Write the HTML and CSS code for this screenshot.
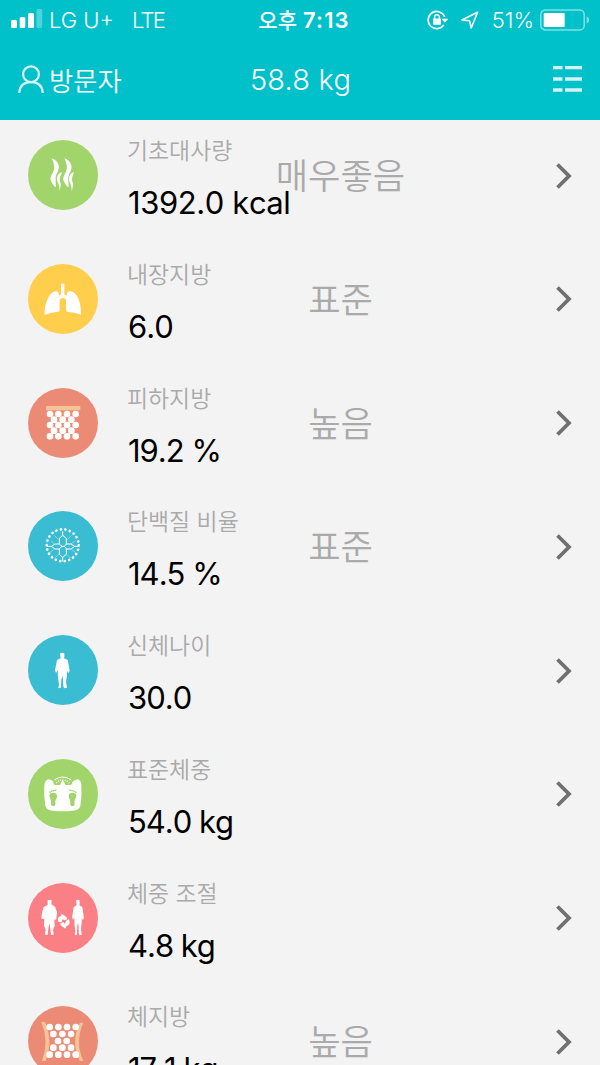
FILE: index.html
```html
<!DOCTYPE html>
<html lang="ko">
<head>
    <meta charset="UTF-8">
    <title>체중</title>
    <link rel="stylesheet" href="styles.css">
</head>
<body>
    <svg class="defs" width="0" height="0">
        <defs>
            <path id="man" d="M-7 1Q0-3 6 1L6 12L5 16L16 21L19 37L22 53L18 61L14 53L14 66L11 87L14 104L6 106L3 101L2 78L0 67L-3 82L-4 104L-12 106L-10 94L-13 75L-14 52L-19 60L-22 51L-19 37L-16 21L-5 16Z"/>
        </defs>
    </svg>

    <header class="header">
        <div class="statusbar">
            <div class="side">
                <svg class="signal" width="32" height="20" viewBox="0 0 32 20" fill="#fff">
                    <rect x="0" y="11" width="6" height="8" rx="1.5"/>
                    <rect x="8.7" y="8" width="5.6" height="11" rx="1.5"/>
                    <rect x="17" y="4" width="6" height="15" rx="1.5"/>
                    <rect x="25.5" y="0" width="5.7" height="19" rx="1.5" opacity=".3"/>
                </svg>
                <span class="carrier">LG U+</span>
                <span class="network">LTE</span>
            </div>
            <div class="clock"><span class="ampm">오후</span> <span class="time">7:13</span></div>
            <div class="side right">
                <svg class="lock" width="22" height="20" viewBox="0 0 22 20" fill="none" stroke="#fff" stroke-width="1.6">
                    <path d="M17.8 7A8.6 8.6 0 1 0 16.8 15"/>
                    <path d="M14.5 8.8H21.3L17.9 12.8Z" fill="#fff" stroke="none"/>
                    <rect x="6" y="8.5" width="8" height="6.2" rx=".8" fill="#fff" stroke="none"/>
                    <path d="M7.6 9V7.2a2.4 2.4 0 0 1 4.8 0V9" stroke-width="1.4"/>
                </svg>
                <svg class="arrow" width="18" height="18" viewBox="0 0 18 18" fill="none" stroke="#fff" stroke-width="1.6" stroke-linejoin="round">
                    <path d="M16.6 1.2L.9 9L8.6 9.8L10.2 17Z"/>
                </svg>
                <span class="percent">51%</span>
                <svg class="battery" width="50" height="22" viewBox="0 0 50 22">
                    <rect x=".8" y=".9" width="43.4" height="20" rx="4.5" fill="none" stroke="#fff" stroke-width="1.5" opacity=".5"/>
                    <rect x="3.7" y="3.9" width="21" height="14" rx="1" fill="#fff"/>
                    <path d="M46.7 7.2Q49.2 8.5 49.2 10.9T46.7 14.8Z" fill="#fff" opacity=".5"/>
                </svg>
            </div>
        </div>
        <div class="navbar">
            <div class="side user">
                <svg width="26" height="29" viewBox="0 0 26 29" fill="none" stroke="#d9f6f7" stroke-width="2.2">
                    <circle cx="13" cy="9.2" r="7.9"/>
                    <path d="M1.2 28Q2 17.2 13 17.2T24.8 28"/>
                </svg>
                <span class="username">방문자</span>
            </div>
            <div class="weight">58.8 kg</div>
            <div class="side right">
                <svg width="30" height="28" viewBox="0 0 30 28" fill="#d5f4f5">
                    <path d="M0 1h9.5v3.3H0zM12 1h17v3.3H12zM0 12.3h9.5v3.4H0zM12 12.3h17v3.4H12zM0 23.3h9.5v3.4H0zM12 23.3h17v3.4H12z"/>
                </svg>
            </div>
        </div>
    </header>

    <main class="list">
        <div class="row">
            <div class="icon green">
                <svg viewBox="24 30 210 210" fill="#fff">
                    <path d="M95 85C109 89 119 103 116 116C112 130 105 137 107 151C106 162 111 173 105 171C96 159 87 149 94 137C102 123 108 111 95 85Z"/>
                    <path d="M126 126C111 131 109 145 113 157C118 167 118 174 119 184C120 171 125 166 121 157C116 145 122 138 126 126Z"/>
                    <path d="M133 85C147 89 157 103 154 116C150 130 143 137 145 151C144 162 149 173 143 171C134 159 125 149 132 137C140 123 146 111 133 85Z"/>
                    <path d="M162 126C147 131 145 145 149 157C154 167 154 174 156 184C157 171 162 166 158 157C153 145 159 138 162 126Z"/>
                </svg>
            </div>
            <div class="info">
                <div class="label">기초대사량</div>
                <div class="value kcal">1392.0 kcal</div>
            </div>
            <div class="state">매우좋음</div>
            <svg class="chevron" viewBox="0 0 16 26"><path d="M1.5 1.5L13 13L1.5 24.5"/></svg>
        </div>

        <div class="row">
            <div class="icon yellow">
                <svg viewBox="24 27 210 210" fill="#fff">
                    <path d="M123 86H133V116Q137 124 141 121Q139 112 147 109C164 106 179 128 182 158L183 179C169 172 154 172 142 170Q137 169 138 160V134Q136 129 129 129T119 134V160Q120 169 115 170C102 172 88 173 74 180C72 147 89 106 110 109Q119 112 116 121Q123 123 123 115Z"/>
                </svg>
            </div>
            <div class="info">
                <div class="label">내장지방</div>
                <div class="value">6.0</div>
            </div>
            <div class="state">표준</div>
            <svg class="chevron" viewBox="0 0 16 26"><path d="M1.5 1.5L13 13L1.5 24.5"/></svg>
        </div>

        <div class="row">
            <div class="icon coral">
                <svg viewBox="24 24 210 210">
                    <path d="M78 78H181V91H78Z" fill="#f5c396"/>
                    <g class="cells">
                        <path d="M90 102h.1M115 102h.1M141 102h.1M167 102h.1"/>
                        <path d="M102 119h.1M128 119h.1M154 119h.1"/>
                        <path d="M90 135h.1M115 135h.1M141 135h.1M167 135h.1"/>
                        <path d="M102 152h.1M128 152h.1M154 152h.1"/>
                        <path d="M90 169h.1M115 169h.1M141 169h.1M167 169h.1"/>
                    </g>
                </svg>
            </div>
            <div class="info">
                <div class="label">피하지방</div>
                <div class="value">19.2 %</div>
            </div>
            <div class="state">높음</div>
            <svg class="chevron" viewBox="0 0 16 26"><path d="M1.5 1.5L13 13L1.5 24.5"/></svg>
        </div>

        <div class="row">
            <div class="icon blue">
                <svg viewBox="24 21 210 210" fill="none" stroke="#fff">
                    <circle cx="128" cy="124" r="48" stroke-width="8" stroke-linecap="round" stroke-dasharray=".1 13.6"/>
                    <path stroke-width="3" d="M128 82V94L118 103V120L126 127H133L139 120V103L128 94M126 127L118 134V151L128 160L139 151V134L133 127M128 160V172M118 120H105L94 127L105 135H118M139 120H153L164 127L153 135H139M94 127H80M164 127H178"/>
                    <path stroke-width="1.6" opacity=".75" d="M115 107L103 94M142 107L154 94M104 120L92 110M153 120L166 110M104 135L90 145M153 135L166 145M118 150L104 163M139 150L152 163"/>
                </svg>
            </div>
            <div class="info">
                <div class="label">단백질 비율</div>
                <div class="value">14.5 %</div>
            </div>
            <div class="state">표준</div>
            <svg class="chevron" viewBox="0 0 16 26"><path d="M1.5 1.5L13 13L1.5 24.5"/></svg>
        </div>

        <div class="row">
            <div class="icon blue">
                <svg viewBox="24 21 210 210" fill="#fff">
                    <use href="#man" x="127" y="75"/>
                </svg>
            </div>
            <div class="info">
                <div class="label">신체나이</div>
                <div class="value">30.0</div>
            </div>
            <div class="state"></div>
            <svg class="chevron" viewBox="0 0 16 26"><path d="M1.5 1.5L13 13L1.5 24.5"/></svg>
        </div>

        <div class="row">
            <div class="icon green">
                <svg viewBox="24 21 210 210" fill="#fff">
                    <path d="M84 82Q92 82 99 88L104 99H152L159 88Q166 82 174 82Q184 86 184 101Q186 132 181 161Q178 175 158 176Q128 180 99 176Q79 175 76 161Q71 132 73 101Q74 86 84 82Z"/>
                    <path d="M100 97Q101 80 116 77Q128 73 141 77Q156 80 157 97Z" fill="#a1d56b"/>
                    <path d="M103 84Q128 66 154 84" fill="none" stroke="#fff" stroke-width="3"/>
                    <path d="M109 93Q128 74 148 93" fill="none" stroke="#fff" stroke-width="4" stroke-dasharray="3 4"/>
                    <path d="M120 99L128 83L137 99Z"/>
                    <g fill="#a1d56b">
                        <path id="foot" d="M89 127C94 120 111 121 111 132C111 141 105 143 106 150C108 160 103 164 97 162C89 159 97 150 91 141Q86 133 89 127Z"/>
                        <use href="#foot" transform="translate(257 0) scale(-1 1)"/>
                        <path d="M88 122L96 117L109 114M169 122L161 117L148 114" fill="none" stroke="#a1d56b" stroke-width="4" stroke-dasharray="5 1"/>
                    </g>
                </svg>
            </div>
            <div class="info">
                <div class="label">표준체중</div>
                <div class="value">54.0 kg</div>
            </div>
            <div class="state"></div>
            <svg class="chevron" viewBox="0 0 16 26"><path d="M1.5 1.5L13 13L1.5 24.5"/></svg>
        </div>

        <div class="row">
            <div class="icon pink">
                <svg viewBox="24 21 210 210" fill="#fff">
                    <path d="M83 73Q89 69 95 73L94 85L105 92L111 108L109 130L103 132L104 151L99 160L101 176L93 177L91 158L88 142L85 158L83 177L75 176L77 160L72 149L73 129L64 128L66 110L71 93L83 87Z"/>
                    <use href="#man" transform="translate(174 72) scale(.8 1)"/>
                    <path d="M115 138Q110 123 123 119L125 113L140 124L142 130L133 133L129 130Q126 132 124 139Z"/>
                    <path d="M147 130Q153 146 139 151L136 158L121 147L122 141L131 139L133 143Q138 141 138 134Z"/>
                </svg>
            </div>
            <div class="info">
                <div class="label">체중 조절</div>
                <div class="value">4.8 kg</div>
            </div>
            <div class="state"></div>
            <svg class="chevron" viewBox="0 0 16 26"><path d="M1.5 1.5L13 13L1.5 24.5"/></svg>
        </div>

        <div class="row">
            <div class="icon coral">
                <svg viewBox="24 21 210 210">
                    <path d="M64 69H75Q100 128 77 186H66Q88 128 64 69ZM190 71H180Q151 128 179 186H190Q164 128 190 71Z" fill="#f5c396"/>
                    <g class="cells">
                        <path d="M89 84h.1M115 84h.1M141 84h.1M167 84h.1"/>
                        <path d="M100 105h.1M127 105h.1M153 105h.1"/>
                        <path d="M114 126h.1M140 126h.1"/>
                        <path d="M100 146h.1M127 146h.1M153 146h.1"/>
                        <path d="M89 167h.1M115 167h.1M141 167h.1M167 167h.1"/>
                    </g>
                </svg>
            </div>
            <div class="info">
                <div class="label">체지방</div>
                <div class="value">17.1 kg</div>
            </div>
            <div class="state">높음</div>
            <svg class="chevron" viewBox="0 0 16 26"><path d="M1.5 1.5L13 13L1.5 24.5"/></svg>
        </div>
    </main>
</body>
</html>
```
FILE: styles.css
```css
body {
    margin: 0;
    height: 1065px;
    overflow: hidden;
    background-color: #f3f3f3;
    font-family: Inter, "Noto Sans CJK KR", sans-serif;
}

svg {
    display: block;
    flex-shrink: 0;
}

.defs {
    display: none;
}

.header {
    height: 120px;
    background-color: #00c1ca;
    color: #ffffff;
    white-space: nowrap;
}

.statusbar {
    display: grid;
    grid-template-columns: 1fr auto 1fr;
    align-items: center;
    height: 39px;
    padding: 0 10px 0 11px;
    font-size: 21px;
}

.side {
    display: flex;
    align-items: center;
}

.right {
    justify-content: flex-end;
}

.signal {
    margin-top: -1px;
}

.carrier {
    margin-left: 6px;
    font-size: 22px;
    font-weight: 300;
    letter-spacing: 0;
}

.network {
    margin-left: 18px;
    font-size: 22px;
    font-weight: 300;
    letter-spacing: -1.7px;
}

.clock {
    display: flex;
    align-items: center;
    gap: 6px;
    margin-left: 7px;
    font-weight: 600;
    line-height: 30px;
}

.ampm {
    margin-top: -2px;
    font-family: "Noto Sans CJK KR", sans-serif;
    font-weight: 500;
    font-size: 21px;
}

.time {
    font-size: 22px;
    letter-spacing: 1.1px;
}

.arrow {
    margin-left: 12px;
}

.percent {
    margin: 0 6px 0 13px;
    font-size: 22px;
    font-weight: 300;
    letter-spacing: 0;
}

.navbar {
    display: grid;
    grid-template-columns: 1fr auto 1fr;
    align-items: center;
    height: 80px;
    padding: 0 17px 0 18px;
}

.user {
    gap: 5px;
}

.username {
    margin-top: 2px;
    font-family: "Noto Sans CJK KR", sans-serif;
    font-size: 26.3px;
    font-weight: 350;
    line-height: 38px;
}

.weight {
    font-size: 29px;
    font-weight: 300;
    letter-spacing: 0.2px;
}

.list {
    margin-top: -0.5px;
}

.row {
    display: flex;
    height: 123.75px;
    padding: 0 28px;
}

.icon {
    flex-shrink: 0;
    width: 70px;
    height: 70px;
    margin-top: 20.5px;
    border-radius: 50%;
}

.green {
    background-color: #a1d56b;
}

.yellow {
    background-color: #ffce4c;
}

.coral {
    background-color: #eb8b76;
}

.blue {
    background-color: #3abcd3;
}

.pink {
    background-color: #fb8086;
}

.cells {
    stroke: #ffffff;
    stroke-width: 20;
    stroke-linecap: round;
}

/* long values are allowed to run on under the state text */
.info {
    width: 112px;
    margin-left: 30px;
    white-space: nowrap;
}

.label {
    margin: 12.5px 0 0 -1px;
    color: #aaaaaa;
    font-family: "Noto Sans CJK KR", sans-serif;
    font-size: 22.9px;
    font-weight: 350;
    line-height: 34px;
}

.value {
    margin-top: 17px;
    color: #000000;
    font-size: 31px;
    line-height: 40px;
    letter-spacing: -1px;
    font-kerning: none;
}

.kcal {
    letter-spacing: -0.4px;
}

.state {
    width: 201px;
    margin-top: 29.5px;
    color: #aaaaaa;
    font-family: "Noto Sans CJK KR", sans-serif;
    font-size: 35.2px;
    font-weight: 350;
    line-height: 50px;
    text-align: center;
}

.chevron {
    width: 16px;
    height: 26px;
    margin: 43px 0 0 auto;
    fill: none;
    stroke: #707070;
    stroke-width: 3.8;
}
```
